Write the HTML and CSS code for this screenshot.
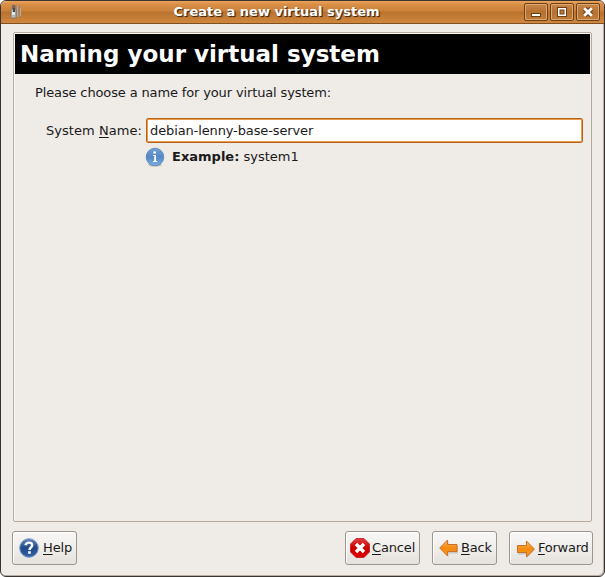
FILE: index.html
```html
<!DOCTYPE html>
<html lang="en">
<head>
<meta charset="utf-8">
<title>Create a new virtual system</title>
<link rel="stylesheet" href="styles.css">
</head>
<body>
<div class="window">
  <header class="titlebar">
    <svg class="app-icon" width="12" height="16" viewBox="0 0 12 16">
      <path d="M5.500 3L8 1l3 3v8l-4 2H5.500z" fill="#a48568"/>
      <path d="M7.500 2v11M10.500 4v8" stroke="#b9aa98"/>
      <path d="M2 1h3.500v6H2z" fill="#7d6955"/>
      <path d="M1 5h5v9H1z" fill="#b7b7b5" stroke="#77706a" stroke-width=".7"/>
      <path d="M3 4h2v4H3z" fill="#4d4741"/>
      <path d="M2 8h3v3H2z" fill="#e3e5e6"/>
    </svg>
    <h1 class="title">Create a new virtual system</h1>
    <div class="controls">
      <span class="control"><svg width="22" height="16" viewBox="0 0 22 16"><path d="M6 9h10v4H6z" fill="#6b4119"/><path d="M7 10h8v2H7z" fill="#fff"/></svg></span>
      <span class="control"><svg width="22" height="16" viewBox="0 0 22 16"><path d="M6 3h10v10H6z" fill="#6b4119"/><path d="M7 4h8v8H7z" fill="#fff"/><path d="M8.500 5.500h5v5h-5z" fill="#6b4119"/><path d="M9.500 6.500h3v3h-3z" fill="#c37b34"/></svg></span>
      <span class="control"><svg width="22" height="16" viewBox="0 0 22 16"><path d="M7.500 4.500l7 7M14.500 4.500l-7 7" stroke="#6b4119" stroke-width="5"/><path d="M7.200 4.200l7.600 7.600M14.800 4.200l-7.600 7.600" stroke="#fff" stroke-width="2.800"/></svg></span>
    </div>
  </header>
  <main class="panel">
    <h2 class="heading">Naming your virtual system</h2>
    <p class="intro">Please choose a name for your virtual system:</p>
    <div class="field">
      <label class="label" for="name">System <u>N</u>ame:</label>
      <input class="entry" id="name" type="text" value="debian-lenny-base-server">
    </div>
    <div class="hint">
      <svg width="20" height="20" viewBox="0 0 20 20">
        <defs><linearGradient id="info" x2="0" y2="1"><stop stop-color="#76a2d5"/><stop offset=".5" stop-color="#5487c4"/><stop offset="1" stop-color="#7eb0e5"/></linearGradient></defs>
        <ellipse cx="10" cy="18" rx="7" ry="1.600" fill="#c4c1bc"/>
        <circle cx="10" cy="10" r="8.800" fill="url(#info)" stroke="#5683b8" stroke-width=".8"/>
        <circle cx="9.700" cy="5.500" r="1.300" fill="#fff"/>
        <path d="M8 8h3v6h1.200v1H8v-1h1.200V9H8z" fill="#fff"/>
      </svg>
      <span class="example"><b>Example:</b> system1</span>
    </div>
  </main>
  <footer class="actions">
    <button class="button help">
      <svg width="20" height="20" viewBox="0 0 20 20">
        <defs><linearGradient id="help" x2="0" y2="1"><stop stop-color="#5e86bc"/><stop offset=".5" stop-color="#204a87"/><stop offset="1" stop-color="#3465a4"/></linearGradient></defs>
        <circle cx="10" cy="10" r="9.300" fill="url(#help)" stroke="#7d9cc6"/>
        <path d="M6.500 7.200C7 5 8.500 4.600 10 4.600c2 0 3.200 1 3.200 2.600 0 2-2.700 2.300-2.700 4.800" fill="none" stroke="#fff" stroke-width="2.400"/>
        <path d="M9.100 13.200h2.700v2.600H9.100z" fill="#fff"/>
      </svg><span><u>H</u>elp</span>
    </button>
    <button class="button cancel">
      <svg width="20" height="20" viewBox="0 0 20 20">
        <defs><linearGradient id="stop" x2="0" y2="1"><stop stop-color="#df4040"/><stop offset=".5" stop-color="#cc0000"/><stop offset="1" stop-color="#d80000"/></linearGradient></defs>
        <path d="M6 .5h8L19.500 6v8L14 19.500H6L.5 14V6z" fill="url(#stop)" stroke="#c01a1a" stroke-width=".8"/>
        <path d="M6 6l8 8M14 6l-8 8" stroke="#fff" stroke-width="3.400"/>
      </svg><span><u>C</u>ancel</span>
    </button>
    <button class="button back">
      <svg width="20" height="20" viewBox="0 0 20 20">
        <defs><linearGradient id="arrow" x2="0" y2="1"><stop stop-color="#fcb95e"/><stop offset=".5" stop-color="#f58a10"/><stop offset="1" stop-color="#ff9a18"/></linearGradient></defs>
        <path d="M2 11L9.500 3v4.500H19v8H9.500V19z" fill="#c9c6c1"/>
        <path d="M.7 10L8.500 2v4.500H18v7H8.500V18z" fill="url(#arrow)" stroke="#c9702c" stroke-linejoin="round"/>
      </svg><span><u>B</u>ack</span>
    </button>
    <button class="button forward">
      <svg width="20" height="20" viewBox="0 0 20 20">
        <path d="M18.800 12L10.500 4v4.500H2v8h8.500V20z" fill="#c9c6c1"/>
        <path d="M18.300 11L10.500 3v4.500h-9v7h9V19z" fill="url(#arrow)" stroke="#c9702c" stroke-linejoin="round"/>
      </svg><span><u>F</u>orward</span>
    </button>
  </footer>
</div>
</body>
</html>
```
FILE: styles.css
```css
* { box-sizing: border-box; }
body {
  margin: 0;
  background: #fff;
  color: #1a1a1a;
  font: 13px/16px "DejaVu Sans", sans-serif;
}
svg { display: block; flex: none; }
u { text-decoration-thickness: 1px; text-underline-offset: 2px; }
.window {
  width: 605px;
  height: 577px;
  display: flex;
  flex-direction: column;
  overflow: hidden;
  background: #efebe7;
  border: 1px solid #3b3532;
  border-radius: 6px;
  box-shadow: inset -1px -1px 0 #b8aea4;
}
.titlebar {
  height: 23px;
  flex: none;
  display: flex;
  align-items: center;
  padding: 0 4px 0 9px;
  background: linear-gradient(#eba55b 0, #d98f48 3px, #cc8139 10px, #b9732e 11px, #ce853d 21px);
  border-bottom: 1px solid #80501f;
}
.title {
  flex: 1;
  margin: 0 3px 0 10px;
  text-align: center;
  color: #fff;
  font-size: 13px;
  line-height: 16px;
  text-shadow: 1px 1px 1px #4b2a10, 1px 1px 0 #66401e;
}
.controls { display: flex; gap: 2px; }
.control {
  width: 24px;
  height: 18px;
  border: 1px solid #6b4119;
  border-radius: 2px;
  box-shadow: inset 0 0 0 1px #dca771;
  background: linear-gradient(#cd884a, #b4712f 50%, #c47d38);
}
.panel {
  width: 579px;
  height: 490px;
  flex: none;
  margin: 8px 0 0 12px;
  border: 1px solid #b5aa9d;
  border-radius: 2px;
  box-shadow: inset 1px 1px 0 #fbfaf8;
  padding: 1px;
}
.heading {
  height: 40px;
  margin: 0;
  padding-left: 5px;
  background: #000;
  color: #fff;
  font-size: 23px;
  line-height: 41px;
}
.intro { margin: 11px 0 0 20px; letter-spacing: -0.135px; }
.field {
  display: flex;
  align-items: center;
  margin: 17px 7px 0 31px;
}
.label { width: 100px; letter-spacing: 0.05px; }
.entry {
  flex: 1;
  height: 25px;
  min-width: 0;
  padding: 0 3px;
  border: 1px solid #b5651c;
  border-radius: 2px;
  box-shadow: inset 0 0 0 1px #ec9a45;
  outline: 0;
  background: #fff;
  color: #1a1a1a;
  font: inherit;
  letter-spacing: -0.12px;
}
.hint {
  display: flex;
  align-items: center;
  gap: 7px;
  margin: 4px 0 0 130px;
}
.actions {
  display: flex;
  gap: 12px;
  margin: 9px 11px 0;
}
.button {
  height: 34px;
  display: flex;
  align-items: center;
  gap: 3px;
  padding: 0 0 0 6px;
  border: 1px solid #9e968d;
  border-radius: 3px;
  background: linear-gradient(#f8f7f6, #f0eeeb 50%, #e5e1dc);
  box-shadow: inset 1px 1px 0 #fff;
  color: #1a1a1a;
  font: inherit;
}
.help { width: 65px; margin-right: auto; gap: 4px; letter-spacing: -0.15px; }
.cancel { width: 75px; padding-left: 4px; gap: 2px; letter-spacing: -0.15px; }
.back { width: 65px; gap: 2px; letter-spacing: -0.2px; }
.forward { width: 84px; gap: 2px; letter-spacing: -0.25px; }
```
